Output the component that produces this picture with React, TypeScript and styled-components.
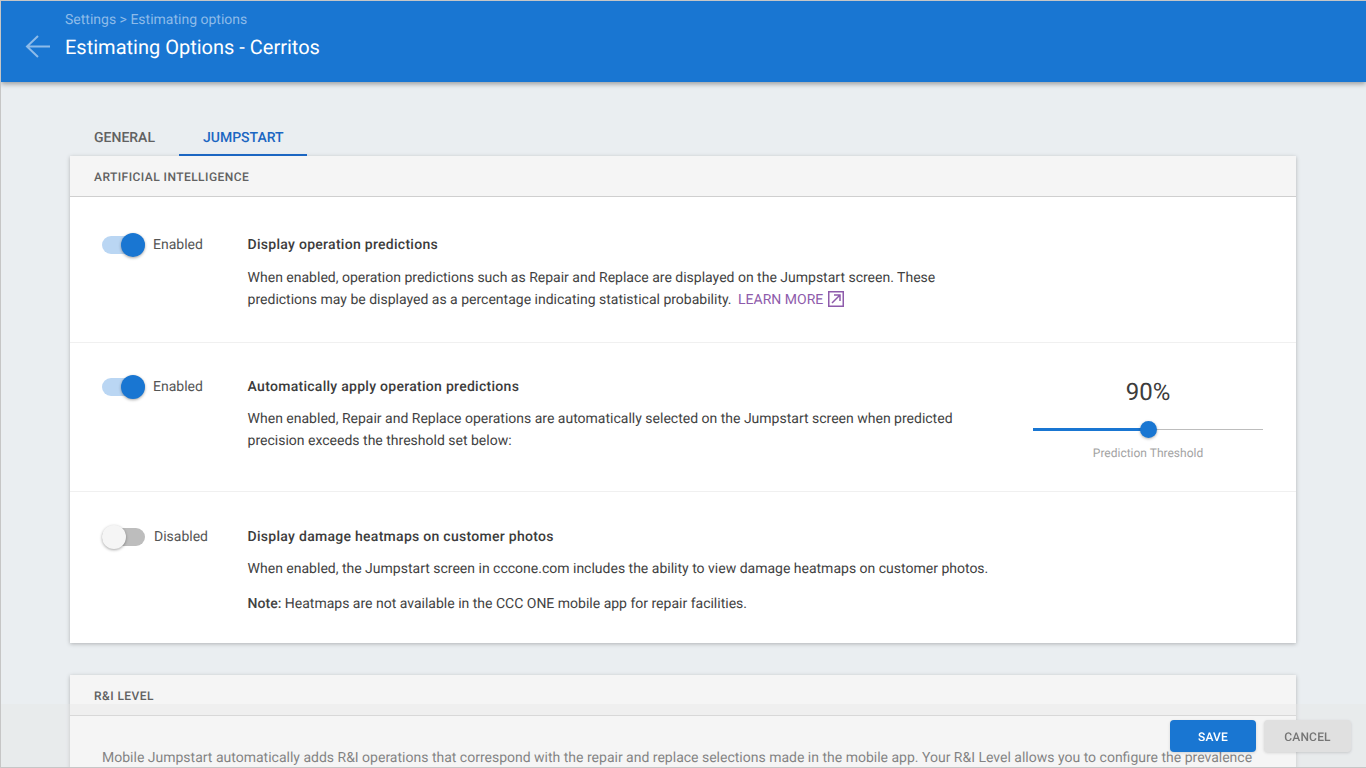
import React from "react";
import styled, { createGlobalStyle } from "styled-components";

const Global = createGlobalStyle`
  html, body { margin: 0; padding: 0; height: 100%; overflow: hidden; }
  body {
    font-family: Roboto, "Liberation Sans", sans-serif;
    background: #eaeef1;
    text-rendering: geometricPrecision;
  }
  * { box-sizing: border-box; }
`;

const Page = styled.div`
  position: relative;
  width: 1366px;
  height: 768px;
  overflow: hidden;
  background: #eaeef1;
  border: 1px solid #c6c6c6;
  border-right: 0;
`;

const Header = styled.header`
  position: relative;
  z-index: 2;
  height: 81px;
  background: #1976d2;
  box-shadow: 0 2px 5px rgba(0, 0, 0, 0.35);
  display: flex;
  align-items: flex-start;
  padding: 34px 0 0 24px;
`;

const BackIcon = styled.svg`
  width: 26px;
  height: 24px;
  flex: none;
  margin-right: 14px;
`;

const Titles = styled.div`
  margin-top: -24px;
`;

const Crumb = styled.div`
  font-size: 14px;
  line-height: 18px;
  color: #8dbbe9;
`;

const Title = styled.h1`
  margin: 4px 0 0;
  font-size: 20px;
  font-weight: 400;
  line-height: 28px;
  color: #fff;
`;

const Content = styled.main`
  padding: 36px 70px 0 69px;
`;

const Tabs = styled.nav`
  display: flex;
  height: 38px;
`;

const Tab = styled.div<{ $active?: boolean }>`
  height: 38px;
  padding: 12px ${(p) => (p.$active ? "23.5px" : "24px")} 0 24px;
  font-size: 14px;
  font-weight: 500;
  line-height: 16px;
  color: ${(p) => (p.$active ? "#1b66c2" : "#616161")};
  border-bottom: 2px solid ${(p) => (p.$active ? "#1b66c2" : "transparent")};
`;

const Card = styled.section`
  background: #fff;
  box-shadow: 0 1px 4px rgba(0, 0, 0, 0.25);
  margin-bottom: 32px;
`;

const CardHeader = styled.div`
  height: 41px;
  padding: 14px 24px 0;
  background: #f5f5f5;
  border-bottom: 1px solid #cfcfcf;
  font-size: 12px;
  font-weight: 500;
  line-height: 14px;
  letter-spacing: 0.45px;
  color: #616161;
`;

const Row = styled.div<{ $h: number; $top: number; $last?: boolean }>`
  height: ${(p) => p.$h}px;
  display: flex;
  align-items: flex-start;
  padding: ${(p) => p.$top}px 33px 0 32px;
  border-bottom: ${(p) => (p.$last ? "0" : "1px solid #f0f0f0")};
`;

const ToggleCell = styled.div`
  width: 145.6px;
  flex: none;
  display: flex;
  align-items: center;
  height: 22px;
`;

const Track = styled.div<{ $on?: boolean }>`
  position: relative;
  width: 43px;
  height: 18px;
  margin-right: ${(p) => (p.$on ? "8px" : "9px")};
  border-radius: 9px;
  background: ${(p) => (p.$on ? "#bad6f3" : "#bdbdbd")};
`;

const Knob = styled.div<{ $on?: boolean }>`
  position: absolute;
  top: -3px;
  left: ${(p) => (p.$on ? "19px" : "0")};
  width: 24px;
  height: 24px;
  border-radius: 50%;
  background: ${(p) => (p.$on ? "#1976d2" : "#f5f5f5")};
  box-shadow: 0 1px 3px rgba(0, 0, 0, 0.35);
`;

const ToggleLabel = styled.span`
  font-size: 14px;
  line-height: 22px;
  color: #555;
`;

const Body = styled.div`
  flex: 1;
  min-width: 0;
`;

const RowTitle = styled.h3<{ $gap: number }>`
  margin: 0 0 ${(p) => p.$gap}px;
  font-size: 14px;
  font-weight: 500;
  line-height: 22px;
  letter-spacing: 0.28px;
  color: #3c3c3c;
`;

const Text = styled.p<{ $w?: number }>`
  margin: 0;
  font-size: 14px;
  line-height: 22px;
  color: #424242;
  max-width: ${(p) => p.$w ?? 760}px;
  & + & { margin-top: 13px; }
`;

const Strong = styled.strong`
  font-weight: 500;
`;

const Line = styled.span``;

const Learn = styled.span`
  margin-left: 6.5px;
  color: #8e5bab;
`;

const ExtIcon = styled.svg`
  width: 16px;
  height: 16px;
  margin-left: 5px;
  vertical-align: -3px;
`;

const SliderBox = styled.div`
  width: 230px;
  flex: none;
  margin: 2px 0 0 0;
  display: flex;
  flex-direction: column;
  align-items: center;
`;

const SliderValue = styled.div`
  font-size: 24px;
  line-height: 28px;
  color: #3c3c3c;
`;

const SliderTrack = styled.div`
  position: relative;
  width: 230px;
  height: 1px;
  margin-top: 23px;
  background: #bdbdbd;
`;

const SliderFill = styled.div`
  position: absolute;
  left: 0;
  top: -1px;
  height: 3px;
  background: #1976d2;
`;

const SliderThumb = styled.div`
  position: absolute;
  top: -8px;
  width: 17px;
  height: 17px;
  margin-left: -8px;
  border-radius: 50%;
  background: #1976d2;
  box-shadow: 0 1px 3px rgba(0, 0, 0, 0.3);
`;

const SliderCaption = styled.div`
  margin-top: 15px;
  font-size: 12px;
  line-height: 16px;
  color: #a3a3a3;
`;

const Intro = styled.div`
  padding: 31px 32px 0;
  font-size: 14px;
  line-height: 22px;
  color: #424242;
  white-space: nowrap;
  overflow: hidden;
`;

const Footer = styled.footer`
  position: fixed;
  left: 1px;
  right: 0;
  bottom: 1px;
  height: 63px;
  z-index: 3;
  background: rgba(230, 230, 230, 0.4);
  display: flex;
  justify-content: flex-end;
  align-items: flex-start;
  gap: 8px;
  padding: 16px 15px 0 0;
`;

const Btn = styled.button<{ $primary?: boolean }>`
  width: ${(p) => (p.$primary ? 86 : 87)}px;
  height: 32px;
  padding: 2px 0 0;
  border: 0;
  border-radius: 4px;
  font-family: inherit;
  font-size: 12px;
  font-weight: 500;
  letter-spacing: 0.2px;
  text-rendering: geometricPrecision;
  background: ${(p) => (p.$primary ? "#1976d2" : "#e0e0e0")};
  color: ${(p) => (p.$primary ? "#fff" : "#757575")};
  box-shadow: 0 1px 3px rgba(0, 0, 0, 0.15);
`;

function Toggle({ on, label }: { on?: boolean; label: string }) {
  return (
    <ToggleCell>
      <Track $on={on}>
        <Knob $on={on} />
      </Track>
      <ToggleLabel>{label}</ToggleLabel>
    </ToggleCell>
  );
}

export default function App() {
  const pct = 50;
  return (
    <Page>
      <Global />
      <Header>
        <BackIcon viewBox="0 0 26 24" fill="none" stroke="#8dbbe9" strokeWidth="2">
          <path d="M25 11.5H2M13 1 2 11.5 13 22" />
        </BackIcon>
        <Titles>
          <Crumb>Settings &gt; Estimating options</Crumb>
          <Title>Estimating Options - Cerritos</Title>
        </Titles>
      </Header>
      <Content>
        <Tabs>
          <Tab>GENERAL</Tab>
          <Tab $active>JUMPSTART</Tab>
        </Tabs>
        <Card>
          <CardHeader>ARTIFICIAL INTELLIGENCE</CardHeader>
          <Row $h={146} $top={37}>
            <Toggle on label="Enabled" />
            <Body>
              <RowTitle $gap={11}>Display operation predictions</RowTitle>
              <Text>
                <Line>When enabled, operation predictions such as Repair and Replace are displayed on the Jumpstart screen. These</Line>{" "}
                <Line>predictions may be displayed as a percentage indicating statistical probability.</Line>
                <Learn>
                  LEARN MORE
                  <ExtIcon viewBox="0 0 16 16" fill="none" stroke="#8e5bab" strokeWidth="1.5">
                    <path d="M.75.75h14.5v14.5H.75z" />
                    <path d="M4 12 12 4M6 4h6v6" />
                  </ExtIcon>
                </Learn>
              </Text>
            </Body>
          </Row>
          <Row $h={149} $top={33}>
            <Toggle on label="Enabled" />
            <Body>
              <RowTitle $gap={10}>Automatically apply operation predictions</RowTitle>
              <Text $w={730}>
                When enabled, Repair and Replace operations are automatically selected on the Jumpstart screen when predicted precision exceeds the threshold set below:
              </Text>
            </Body>
            <SliderBox>
              <SliderValue>90%</SliderValue>
              <SliderTrack>
                <SliderFill style={{ width: `${pct}%` }} />
                <SliderThumb style={{ left: `${pct}%` }} />
              </SliderTrack>
              <SliderCaption>Prediction Threshold</SliderCaption>
            </SliderBox>
          </Row>
          <Row $h={151} $top={34} $last>
            <Toggle label="Disabled" />
            <Body>
              <RowTitle $gap={10}>Display damage heatmaps on customer photos</RowTitle>
              <Text>When enabled, the Jumpstart screen in cccone.com includes the ability to view damage heatmaps on customer photos.</Text>
              <Text>
                <Strong>Note:</Strong> Heatmaps are not available in the CCC ONE mobile app for repair facilities.
              </Text>
            </Body>
          </Row>
        </Card>
        <Card>
          <CardHeader>R&amp;I LEVEL</CardHeader>
          <Intro>Mobile Jumpstart automatically adds R&amp;I operations that correspond with the repair and replace selections made in the mobile app. Your R&amp;I Level allows you to configure the prevalence</Intro>
        </Card>
      </Content>
      <Footer>
        <Btn $primary>SAVE</Btn>
        <Btn>CANCEL</Btn>
      </Footer>
    </Page>
  );
}
